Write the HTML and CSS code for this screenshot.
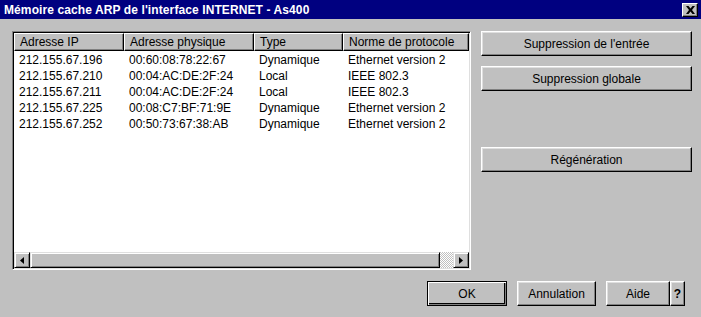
FILE: index.html
```html
<!DOCTYPE html>
<html lang="fr">
<head>
  <meta charset="UTF-8" />
  <title>Mémoire cache ARP</title>
  <link rel="stylesheet" href="styles.css">
</head>
<body>
  <div class="window">
    <div class="titlebar">
      <span class="title">Mémoire cache ARP de l'interface INTERNET - As400</span>
      <button class="close" title="Fermer">
        <svg width="9" height="8" viewBox="0 0 9 8"><path d="M0 0h2.5L4.5 2.5 6.5 0H9L6 4l3 4H6.5L4.5 5.5 2.5 8H0l3-4z" fill="#000"/></svg>
      </button>
    </div>

    <div class="content">
      <div class="listbox">
        <div class="list-head">
          <div class="hcell c1">Adresse IP</div>
          <div class="hcell c2">Adresse physique</div>
          <div class="hcell c3">Type</div>
          <div class="hcell c4">Norme de protocole</div>
        </div>
        <div class="list-rows">
          <div class="row"><span class="cell c1">212.155.67.196</span><span class="cell c2">00:60:08:78:22:67</span><span class="cell c3">Dynamique</span><span class="cell c4">Ethernet version 2</span></div>
          <div class="row"><span class="cell c1">212.155.67.210</span><span class="cell c2">00:04:AC:DE:2F:24</span><span class="cell c3">Local</span><span class="cell c4">IEEE 802.3</span></div>
          <div class="row"><span class="cell c1">212.155.67.211</span><span class="cell c2">00:04:AC:DE:2F:24</span><span class="cell c3">Local</span><span class="cell c4">IEEE 802.3</span></div>
          <div class="row"><span class="cell c1">212.155.67.225</span><span class="cell c2">00:08:C7:BF:71:9E</span><span class="cell c3">Dynamique</span><span class="cell c4">Ethernet version 2</span></div>
          <div class="row"><span class="cell c1">212.155.67.252</span><span class="cell c2">00:50:73:67:38:AB</span><span class="cell c3">Dynamique</span><span class="cell c4">Ethernet version 2</span></div>
        </div>
        <div class="hscroll">
          <div class="arrow">
            <svg width="4" height="7" viewBox="0 0 4 7"><path d="M4 0v7L0 3.5z" fill="#000"/></svg>
          </div>
          <div class="thumb"></div>
          <div class="track"></div>
          <div class="arrow">
            <svg width="4" height="7" viewBox="0 0 4 7"><path d="M0 0v7l4-3.5z" fill="#000"/></svg>
          </div>
        </div>
      </div>

      <div class="side">
        <button class="btn wide">Suppression de l'entrée</button>
        <button class="btn wide">Suppression globale</button>
        <button class="btn wide regen">Régénération</button>
      </div>
    </div>

    <div class="footer">
      <button class="btn default ok">OK</button>
      <button class="btn cancel">Annulation</button>
      <div class="help-group">
        <button class="btn help">Aide</button>
        <button class="btn qmark">?</button>
      </div>
    </div>
  </div>
</body>
</html>
```

FILE: styles.css
```css
:root {
  --face: #c0c0c0;
  --light: #dfdfdf;
  --shadow: #808080;
  --navy: #000080;
}

* {
  box-sizing: border-box;
}

body {
  margin: 0;
  background: var(--face);
  font-family: "Liberation Sans", Arial, sans-serif;
  font-size: 12px;
  color: #000;
}

.window {
  width: 701px;
  height: 317px;
  display: flex;
  flex-direction: column;
  background: var(--face);
}

.titlebar {
  height: 19px;
  background: var(--navy);
  display: flex;
  align-items: center;
  justify-content: space-between;
  padding: 0 3px 0 4px;
}

.title {
  color: #fff;
  font-weight: bold;
  font-size: 12px;
  letter-spacing: 0.1px;
  white-space: nowrap;
}

.close {
  width: 16px;
  height: 14px;
  padding: 0;
  background: var(--face);
  border: 1px solid;
  border-color: #fff #000 #000 #fff;
  box-shadow: inset -1px -1px var(--shadow);
  display: flex;
  align-items: center;
  justify-content: center;
}

.content {
  display: flex;
  gap: 10px;
  padding: 12px 9px 0 12px;
}

/* list view */
.listbox {
  width: 459px;
  height: 239px;
  background: #fff;
  border: 1px solid;
  border-color: var(--shadow) #fff #fff var(--shadow);
  box-shadow: inset 1px 1px #000, inset -1px -1px var(--light);
  padding: 1px;
  display: flex;
  flex-direction: column;
}

.list-head {
  display: flex;
  height: 18px;
}

.hcell {
  background: var(--face);
  border: 1px solid;
  border-color: #fff #000 #000 #fff;
  box-shadow: inset -1px -1px var(--shadow);
  padding: 1px 0 0 5px;
  white-space: nowrap;
  line-height: 14px;
}

.c1 { width: 110px; }
.c2 { width: 130px; }
.c3 { width: 89px; }
.c4 { width: 126px; }

.list-rows {
  flex: 1;
  padding-top: 1px;
}

.row {
  display: flex;
  height: 16px;
  line-height: 16px;
}

.cell {
  padding-left: 5px;
  white-space: nowrap;
}

.hscroll {
  display: flex;
  height: 16px;
}

.arrow,
.thumb {
  background: var(--face);
  border: 1px solid;
  border-color: var(--light) #000 #000 var(--light);
  box-shadow: inset 1px 1px #fff, inset -1px -1px var(--shadow);
}

.arrow {
  width: 16px;
  display: flex;
  align-items: center;
  justify-content: center;
}

.thumb {
  width: 410px;
}

.track {
  flex: 1;
  background: repeating-conic-gradient(#fff 0 25%, var(--face) 0 50%) 0 0 / 2px 2px;
}

/* buttons */
.btn {
  font-family: inherit;
  font-size: 12px;
  color: #000;
  background: var(--face);
  border: 1px solid;
  border-color: #fff #000 #000 #fff;
  box-shadow: inset -1px -1px var(--shadow), inset 1px 1px var(--light);
  height: 25px;
  padding: 0;
}

.side {
  display: flex;
  flex-direction: column;
  gap: 10px;
}

.wide {
  width: 211px;
}

.regen {
  margin-top: 46px;
}

.footer {
  display: flex;
  justify-content: flex-end;
  gap: 10px;
  padding: 11px 16px 0 0;
}

.default {
  border-color: #000;
  box-shadow: inset 1px 1px #fff, inset -1px -1px var(--shadow), inset -2px -2px #000;
}

.ok { width: 80px; }
.cancel { width: 79px; }

.help-group {
  display: flex;
}

.help { width: 64px; }

.qmark {
  width: 15px;
  font-weight: bold;
}
```
